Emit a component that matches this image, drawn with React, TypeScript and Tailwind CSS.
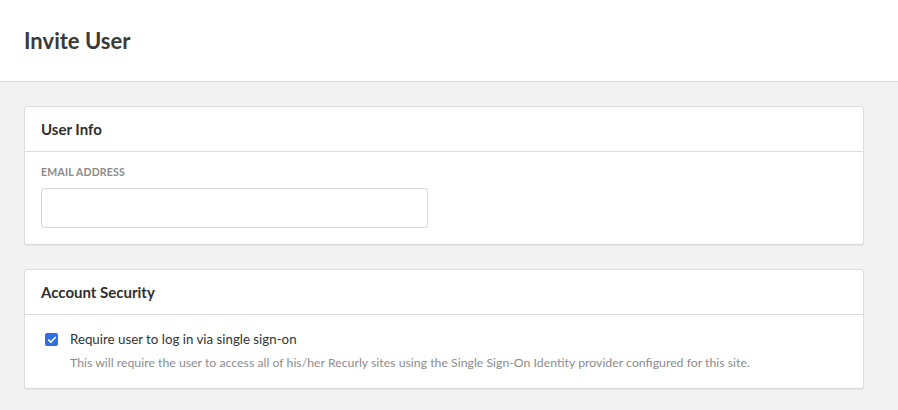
import { Check } from 'lucide-react';

const App = () => {
  return (
    <div className="min-h-screen bg-[#f2f2f2] font-['Lato',sans-serif] text-[#333]">
      {/* Header */}
      <div className="h-[82px] bg-white border-b border-[#d9d9d9] flex items-center px-6">
        <h1 className="text-[22px] font-bold text-[#3a3a3a]">Invite User</h1>
      </div>

      <div className="px-6 pt-6 pr-[34px] space-y-6">
        {/* User Info */}
        <div className="bg-white border border-[#dcdcdc] rounded-[3px] shadow-[0_1px_1px_rgba(0,0,0,0.05)]">
          <div className="h-[45px] flex items-center px-4 border-b border-[#dcdcdc]">
            <h2 className="text-[15px] font-bold text-[#2f2f2f]">User Info</h2>
          </div>
          <div className="px-4 pt-[12px] pb-[16px]">
            <label className="block text-[10.5px] leading-[16px] font-bold tracking-[0.02em] text-[#8a8a8a] uppercase">
              Email Address
            </label>
            <input
              type="text"
              className="mt-[8px] block w-[387px] h-[40px] border border-[#d4d4d4] rounded-[3px] bg-white px-3 text-sm outline-none"
            />
          </div>
        </div>

        {/* Account Security */}
        <div className="bg-white border border-[#dcdcdc] rounded-[3px] shadow-[0_1px_1px_rgba(0,0,0,0.05)]">
          <div className="h-[45px] flex items-center px-4 border-b border-[#dcdcdc]">
            <h2 className="text-[15px] font-bold text-[#2f2f2f]">Account Security</h2>
          </div>
          <div className="px-4 pt-[14px] pb-[15px] flex gap-[12px]">
            <div className="mt-[4px] ml-[4px] w-[13px] h-[13px] rounded-[2px] bg-[#2f6fe4] flex items-center justify-center shrink-0">
              <Check className="w-[10px] h-[10px] text-white" strokeWidth={4} />
            </div>
            <div>
              <div className="text-[13.3px] text-[#333] leading-[20px]">
                Require user to log in via single sign-on
              </div>
              <div className="text-[12.3px] text-[#8c8c8c] leading-[20px] mt-[4px]">
                This will require the user to access all of his/her Recurly sites using the Single Sign-On Identity provider configured for this site.
              </div>
            </div>
          </div>
        </div>
      </div>
    </div>
  );
};

export default App;
